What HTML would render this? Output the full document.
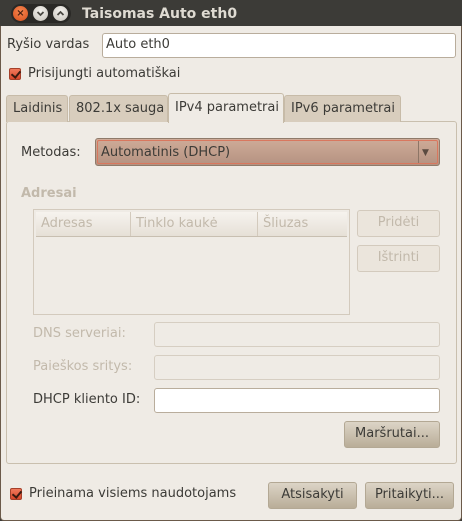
<!DOCTYPE html>
<html><head><meta charset="utf-8"><style>
*{box-sizing:border-box;margin:0;padding:0}
body{width:462px;height:521px;overflow:hidden;background:#3c3b37;font-family:"DejaVu Sans","Liberation Sans",sans-serif;font-size:13px;color:#3c3b37;position:relative}
.a{position:absolute}
#win{left:0;top:26px;width:462px;height:495px;background:#efebe5;border:1px solid #6b5a4a;border-top:none;border-radius:0 0 4px 4px}
.t{position:absolute;white-space:nowrap;line-height:16px}
.entry{position:absolute;border:1px solid #b9ad9c;border-radius:3px;background:#fff}
.dis{background:#efebe5;border-color:#d6cec2}
.btn{position:absolute;border:1px solid #b3a894;border-radius:3px;background:linear-gradient(#dcd4c6,#b9ad98);text-align:center;line-height:24px;color:#3c3b37}
.btnd{background:#ebe5dc;border-color:#d3cabd;color:#c2b9ab}
.cb{position:absolute;width:12px;height:12px;border:1px solid #a5402a;border-radius:2px;background:linear-gradient(#f07a5c,#d8472b)}
.cb:after{content:"";position:absolute;left:3px;top:0px;width:4px;height:7px;border:solid #3a1a10;border-width:0 2px 2px 0;transform:rotate(40deg)}
.tab{position:absolute;top:95px;height:27px;background:#d8cdbd;border:1px solid #c7bba8;border-bottom:none;border-radius:3px 3px 0 0;line-height:26px;padding-left:6px}
.g{color:#c2b9ab}
</style></head><body>
<div class="a" style="left:11px;top:4px;width:60px;height:19px;border-radius:10px;background:#2a2926"></div>
<div class="a" style="left:13px;top:6px;width:15px;height:15px;border-radius:50%;background:radial-gradient(circle at 50% 35%,#f7864f,#d6501e);color:#4a2010;font-size:10px;text-align:center;line-height:15px;font-weight:bold">×</div>
<div class="a" style="left:33px;top:6px;width:15px;height:15px;border-radius:50%;background:radial-gradient(circle at 50% 35%,#f4f2ee,#c6c2ba)"></div>
<svg class="a" style="left:33px;top:6px" width="15" height="15"><path d="M4.5 6 L7.5 9 L10.5 6" stroke="#4a4842" stroke-width="1.8" fill="none"/></svg>
<div class="a" style="left:53px;top:6px;width:15px;height:15px;border-radius:50%;background:radial-gradient(circle at 50% 35%,#f4f2ee,#c6c2ba)"></div>
<svg class="a" style="left:53px;top:6px" width="15" height="15"><path d="M4.5 9 L7.5 6 L10.5 9" stroke="#4a4842" stroke-width="1.8" fill="none"/></svg>
<div class="t" style="left:82px;top:6px;color:#dfdbd2;font-weight:bold;font-size:14px">Taisomas Auto eth0</div>
<div id="win" class="a"></div>

<div class="t" style="left:7px;top:37px">Ryšio vardas</div>
<div class="entry" style="left:102px;top:33px;width:354px;height:25px"></div>
<div class="t" style="left:106px;top:37px">Auto eth0</div>

<div class="cb" style="left:9px;top:68px"></div>
<div class="t" style="left:28px;top:66px">Prisijungti automatiškai</div>

<div class="a" style="left:6px;top:121px;width:451px;height:343px;border:1px solid #c9bfae;border-radius:3px;background:#efebe5"></div>
<div class="tab" style="left:6px;width:62px">Laidinis</div>
<div class="tab" style="left:69px;width:99px">802.1x sauga</div>
<div class="tab" style="left:284px;width:117px">IPv6 parametrai</div>
<div class="tab" style="left:168px;top:93px;width:116px;height:30px;background:#efebe5;line-height:28px">IPv4 parametrai</div>

<div class="t" style="left:21px;top:145px">Metodas:</div>
<div class="a" style="left:95px;top:138px;width:345px;height:28px;border:1px solid #8f7a6a;border-radius:3px;background:linear-gradient(#cfab98,#b49281)"><div class="a" style="left:1px;top:1px;right:1px;bottom:1px;border:1px solid #d9775e;border-radius:2px"></div><div class="a" style="left:322px;top:2px;width:1px;height:22px;background:#8d7566"></div></div>
<div class="t" style="left:101px;top:145px">Automatinis (DHCP)</div>
<div class="t" style="left:422px;top:145px;color:#5a4a40;font-size:9px">▼</div>

<div class="t g" style="left:21px;top:186px;font-weight:bold">Adresai</div>
<div class="a" style="left:33px;top:209px;width:317px;height:106px;border:1px solid #d3cabd"></div>
<div class="a" style="left:36px;top:212px;width:311px;height:25px;background:linear-gradient(#f6f3ee,#e6e0d7);border-bottom:1px solid #c8bfb1"></div>
<div class="a" style="left:130px;top:212px;width:1px;height:24px;background:#d3cabd"></div>
<div class="a" style="left:257px;top:212px;width:1px;height:24px;background:#d3cabd"></div>
<div class="t g" style="left:41px;top:216px">Adresas</div>
<div class="t g" style="left:136px;top:216px">Tinklo kaukė</div>
<div class="t g" style="left:263px;top:216px">Šliuzas</div>
<div class="btn btnd" style="left:357px;top:210px;width:83px;height:27px">Pridėti</div>
<div class="btn btnd" style="left:357px;top:245px;width:83px;height:27px">Ištrinti</div>

<div class="t g" style="left:33px;top:326px">DNS serveriai:</div>
<div class="entry dis" style="left:154px;top:322px;width:286px;height:25px"></div>
<div class="t g" style="left:33px;top:359px">Paieškos sritys:</div>
<div class="entry dis" style="left:154px;top:355px;width:286px;height:25px"></div>
<div class="t" style="left:33px;top:392px">DHCP kliento ID:</div>
<div class="entry" style="left:154px;top:388px;width:286px;height:25px"></div>
<div class="btn" style="left:344px;top:421px;width:96px;height:27px">Maršrutai...</div>

<div class="cb" style="left:10px;top:488px"></div>
<div class="t" style="left:29px;top:486px">Prieinama visiems naudotojams</div>
<div class="btn" style="left:268px;top:482px;width:89px;height:27px">Atsisakyti</div>
<div class="btn" style="left:365px;top:482px;width:89px;height:27px">Pritaikyti...</div>
</body></html>
